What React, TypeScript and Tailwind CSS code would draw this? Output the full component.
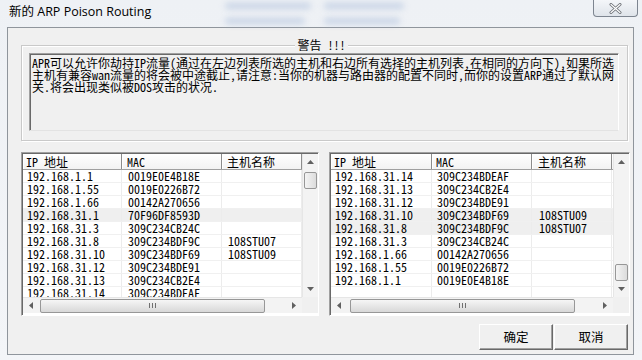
import React from "react"

type Row = { ip: string; mac: string; name?: string; hot?: boolean }

const leftRows: Row[] = [
  { ip: "192.168.1.1", mac: "0019E0E4B18E" },
  { ip: "192.168.1.55", mac: "0019E0226B72" },
  { ip: "192.168.1.66", mac: "00142A270656" },
  { ip: "192.168.31.1", mac: "70F96DF8593D", hot: true },
  { ip: "192.168.31.3", mac: "309C234CB24C" },
  { ip: "192.168.31.8", mac: "309C234BDF9C", name: "108STU07" },
  { ip: "192.168.31.10", mac: "309C234BDF69", name: "108STU09" },
  { ip: "192.168.31.12", mac: "309C234BDE91" },
  { ip: "192.168.31.13", mac: "309C234CB2E4" },
  { ip: "192.168.31.14", mac: "309C234BDEAF" },
]

const rightRows: Row[] = [
  { ip: "192.168.31.14", mac: "309C234BDEAF" },
  { ip: "192.168.31.13", mac: "309C234CB2E4" },
  { ip: "192.168.31.12", mac: "309C234BDE91" },
  { ip: "192.168.31.10", mac: "309C234BDF69", name: "108STU09", hot: true },
  { ip: "192.168.31.8", mac: "309C234BDF9C", name: "108STU07", hot: true },
  { ip: "192.168.31.3", mac: "309C234CB24C" },
  { ip: "192.168.1.66", mac: "00142A270656" },
  { ip: "192.168.1.55", mac: "0019E0226B72" },
  { ip: "192.168.1.1", mac: "0019E0E4B18E" },
  { ip: "", mac: "" },
]

const MONO = "font-['Noto_Sans_Mono_CJK_SC','Noto_Sans_CJK_SC',monospace]"

const Arrow = ({ dir }: { dir: "up" | "down" | "left" | "right" }) => {
  const pts = {
    up: "0,4 3.5,0 7,4",
    down: "0,0 7,0 3.5,4",
    left: "4,0 4,7 0,3.5",
    right: "0,0 0,7 4,3.5",
  }[dir]
  const vertical = dir === "up" || dir === "down"
  return (
    <svg width={vertical ? 7 : 4} height={vertical ? 4 : 7} viewBox={vertical ? "0 0 7 4" : "0 0 4 7"}>
      <polygon points={pts} fill="#606060" />
    </svg>
  )
}

function VScroll({ thumbTop }: { thumbTop: number }) {
  return (
    <div className="w-[16px] h-full flex flex-col bg-[#f3f3f3] border-l border-[#e6e6e6]">
      <div className="h-[16px] flex items-center justify-center">
        <Arrow dir="up" />
      </div>
      <div className="flex-1 flex flex-col">
        <div style={{ height: thumbTop }} />
        <div className="mx-[1px] h-[17px] rounded-[2px] border border-[#979797] bg-gradient-to-r from-[#f4f4f4] to-[#dcdcdc]" />
      </div>
      <div className="h-[16px] flex items-center justify-center">
        <Arrow dir="down" />
      </div>
    </div>
  )
}

function HScroll({ thumbLeft }: { thumbLeft: number }) {
  return (
    <div className="flex-1 h-full flex bg-[#f3f3f3] border-t border-[#e6e6e6]">
      <div className="w-[16px] flex items-center justify-center">
        <Arrow dir="left" />
      </div>
      <div className="flex-1 flex items-center">
        <div style={{ width: thumbLeft - 16 }} />
        <div className="w-[225px] h-[14px] rounded-[2px] border border-[#979797] bg-gradient-to-b from-[#f6f6f6] to-[#d8d8d8] flex items-center justify-center gap-[2px]">
          <span className="w-px h-[5px] bg-[#707070]" />
          <span className="w-px h-[5px] bg-[#707070]" />
          <span className="w-px h-[5px] bg-[#707070]" />
        </div>
      </div>
      <div className="w-[16px] flex items-center justify-center">
        <Arrow dir="right" />
      </div>
    </div>
  )
}

function ListView({
  rows,
  widths,
  pads,
  thumbTop,
  thumbLeft,
  boxWidth,
}: {
  rows: Row[]
  widths: [number, number, number]
  pads: [number, number, number]
  thumbTop: number
  thumbLeft: number
  boxWidth: number
}) {
  return (
    <div
      className="h-[164px] flex flex-col bg-white border border-t-[#a0a0a0] border-l-[#a0a0a0] border-r-white border-b-white shadow-[inset_1px_1px_0_#696969]"
      style={{ width: boxWidth }}
    >
      <div className="flex h-[144px] pl-px pt-px">
        <div className="flex-1 flex flex-col overflow-hidden">
          <div className="flex h-[16px] shrink-0 bg-gradient-to-b from-white to-[#f3f3f3] border-b border-[#a0a0a0] text-[12px] leading-[15px] text-black">
            {["IP 地址", "MAC", "主机名称"].map((label, i) => (
              <div
                key={label}
                className={`${MONO} h-full border-r border-[#8c8c8c] shadow-[inset_1px_0_0_white] whitespace-nowrap`}
                style={{ width: widths[i], paddingLeft: pads[i] - 1 }}
              >
                {label}
              </div>
            ))}
          </div>
          {rows.map((row, r) => (
            <div
              key={r}
              className={`flex h-[13px] shrink-0 border-b border-[#f0f0f0] ${row.hot ? "bg-[#efefef]" : "bg-white"}`}
            >
              {[row.ip, row.mac, row.name ?? ""].map((cell, i) => (
                <div
                  key={i}
                  className={`${MONO} h-full border-r border-[#ececec] text-[12px] leading-[12px] text-black whitespace-nowrap`}
                  style={{ width: widths[i], paddingLeft: pads[i] }}
                >
                  {cell}
                </div>
              ))}
            </div>
          ))}
        </div>
        <VScroll thumbTop={thumbTop} />
      </div>
      <div className="flex h-[16px] pl-px">
        <HScroll thumbLeft={thumbLeft} />
        <div className="w-[16px] bg-[#f0f0f0]" />
      </div>
    </div>
  )
}

const warningLines = [
  "APR可以允许你劫持IP流量(通过在左边列表所选的主机和右边所有选择的主机列表,在相同的方向下),如果所选",
  "主机有兼容wan流量的将会被中途截止,请注意:当你的机器与路由器的配置不同时,而你的设置ARP通过了默认网",
  "关.将会出现类似被DOS攻击的状况.",
]

export default function App() {
  return (
    <div className="relative w-[642px] h-[360px] overflow-hidden bg-gradient-to-b from-[#eef1f5] to-[#f3f5f8] font-['Open_Sans','Noto_Sans_CJK_SC',sans-serif]">
      {/* blurred desktop behind the glass frame */}
      <div className="absolute left-[225px] top-[3px] w-[86px] h-[6px] rounded bg-[#9fb4d6] opacity-50 blur-[3px]" />
      <div className="absolute left-[225px] top-[18px] w-[80px] h-[6px] rounded bg-[#9fb4d6] opacity-50 blur-[3px]" />
      <div className="absolute left-[324px] top-[3px] w-[80px] h-[6px] rounded bg-[#9fb4d6] opacity-50 blur-[3px]" />
      <div className="absolute left-[324px] top-[18px] w-[76px] h-[6px] rounded bg-[#9fb4d6] opacity-50 blur-[3px]" />

      {/* title bar */}
      <div className="relative flex h-[27px] items-start">
        <div className="pl-[9px] pt-[3px] text-[12.5px] leading-[18px] text-black">新的 ARP Poison Routing</div>
        <div className="ml-auto mr-[4px] w-[45px] h-[17px] rounded-b-[4px] border border-t-0 border-[#7d8590] bg-gradient-to-b from-[#f4f6f9] to-[#dfe4ea] flex items-center justify-center">
          <svg width="13" height="11" viewBox="0 0 13 11">
            <path d="M2 1.5 L11 9.5 M11 1.5 L2 9.5" stroke="#6b6f75" strokeWidth="3" strokeLinecap="round" />
            <path d="M2 1.5 L11 9.5 M11 1.5 L2 9.5" stroke="#ffffff" strokeWidth="1.2" strokeLinecap="round" />
          </svg>
        </div>
      </div>

      {/* client area */}
      <div className="ml-[7px] w-[627px] h-[328px] border border-[#8f959c] bg-[#f0f0f0] pl-[13px] pt-[17px] text-black">
        {/* group box */}
        <div className="relative w-[607px] h-[96px] border border-[#c9c9c9] shadow-[inset_1px_1px_0_white,1px_1px_0_white] px-[7px] pt-[7px]">
          <div className="absolute -top-[8px] left-0 right-0 flex justify-center pr-[6px]">
            <span className={`${MONO} bg-[#f0f0f0] px-[2px] text-[12px] leading-[14px]`}>警告 !!!</span>
          </div>
          <div className="w-[590px] h-[78px] bg-[#f0f0f0] border border-t-[#a0a0a0] border-l-[#a0a0a0] border-r-white border-b-[#e3e3e3] shadow-[inset_1px_1px_0_#696969] pl-[2px] pt-[3px]">
            {warningLines.map((line) => (
              <div key={line} className={`${MONO} whitespace-nowrap text-[12px] leading-[12px]`}>
                {line}
              </div>
            ))}
          </div>
        </div>

        {/* lists */}
        <div className="mt-[11px] flex gap-[10px]">
          <ListView
            rows={leftRows}
            widths={[99, 100, 80]}
            pads={[4, 6, 6]}
            thumbTop={2}
            thumbLeft={17}
            boxWidth={298}
          />
          <ListView
            rows={rightRows}
            widths={[101, 100, 80]}
            pads={[4, 5, 7]}
            thumbTop={94}
            thumbLeft={19}
            boxWidth={301}
          />
        </div>

        {/* buttons */}
        <div className="mt-[8px] w-[607px] flex justify-end gap-[1px]">
          {["确定", "取消"].map((label) => (
            <button
              key={label}
              className="w-[74px] h-[26px] bg-[#f0f0f0] border border-t-white border-l-white border-r-[#696969] border-b-[#696969] shadow-[inset_-1px_-1px_0_#a0a0a0] text-[12.5px] leading-[14px] font-['Noto_Sans_CJK_SC',sans-serif]"
            >
              {label}
            </button>
          ))}
        </div>
      </div>
    </div>
  )
}
